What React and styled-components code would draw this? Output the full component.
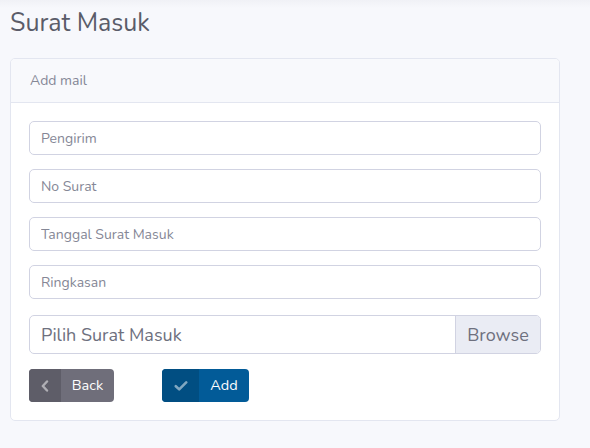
import React from 'react';
import styled, { createGlobalStyle } from 'styled-components';

const GlobalStyle = createGlobalStyle`
body {
    margin: 0;
    background: #f7f8fc;
    font-family: "Nunito", Lato, "Open Sans", sans-serif;
}
* { box-sizing: border-box; }
`

export default function App() {
    return (
        <Page>
            <GlobalStyle />
            <TopShade />
            <Title>Surat Masuk</Title>
            <Card>
                <CardHeader>Add mail</CardHeader>
                <CardBody>
                    <Input placeholder="Pengirim" />
                    <Input placeholder="No Surat" />
                    <Input placeholder="Tanggal Surat Masuk" />
                    <Input placeholder="Ringkasan" />
                    <FileGroup>
                        <FileLabel>Pilih Surat Masuk</FileLabel>
                        <BrowseBtn>Browse</BrowseBtn>
                    </FileGroup>
                    <Actions>
                        <SplitButton variant="back">
                            <IconPart variant="back">
                                <svg width="10" height="12" viewBox="0 0 10 12">
                                    <path d="M7 1.5 L2.8 6 L7 10.5" fill="none" stroke="rgba(255,255,255,.5)" strokeWidth="2.4" strokeLinecap="round" strokeLinejoin="round" />
                                </svg>
                            </IconPart>
                            <TextPart>Back</TextPart>
                        </SplitButton>
                        <SplitButton variant="add">
                            <IconPart variant="add">
                                <svg width="14" height="12" viewBox="0 0 14 12">
                                    <path d="M1.8 6.2 L5.2 9.4 L12.2 2.4" fill="none" stroke="rgba(255,255,255,.5)" strokeWidth="2.6" strokeLinecap="round" strokeLinejoin="round" />
                                </svg>
                            </IconPart>
                            <TextPart>Add</TextPart>
                        </SplitButton>
                    </Actions>
                </CardBody>
            </Card>
        </Page>
    )
}

//CSS//
const Page = styled.div`
padding: 0 30px 27px 10px;
min-height: 448px;
`

const TopShade = styled.div`
position: absolute;
top: 0;
left: 0;
right: 0;
height: 8px;
background: linear-gradient(#f0f1f6, #f7f8fc);
`

const Title = styled.h1`
position: relative;
margin: 0;
padding-top: 6px;
height: 58px;
font-size: 25px;
font-weight: 400;
color: #5a5c69;
`

const Card = styled.div`
background: #fff;
border: 1px solid #e3e6f0;
border-radius: 5px;
overflow: hidden;
`

const CardHeader = styled.div`
height: 44px;
padding: 0 19px;
display: flex;
align-items: center;
background: #f8f9fc;
border-bottom: 1px solid #e3e6f0;
font-size: 14px;
color: #858796;
`

const CardBody = styled.div`
padding: 18px 18px 18px 18px;
display: flex;
flex-direction: column;
`

const Input = styled.input`
height: 34px;
margin-bottom: 14px;
padding: 0 11px;
border: 1px solid #d1d3e2;
border-radius: 5px;
font-family: inherit;
font-size: 14px;
color: #6e707e;
outline: none;

&::placeholder {
    color: #858796;
}
`

const FileGroup = styled.div`
height: 39px;
margin-top: 2px;
display: flex;
border: 1px solid #d1d3e2;
border-radius: 5px;
overflow: hidden;
`

const FileLabel = styled.div`
flex: 1;
display: flex;
align-items: center;
padding: 0 11px;
font-size: 18px;
color: #6e707e;
`

const BrowseBtn = styled.div`
width: 85px;
display: flex;
align-items: center;
justify-content: center;
background: #eaecf4;
border-left: 1px solid #d1d3e2;
font-size: 18px;
color: #6e707e;
`

const Actions = styled.div`
display: flex;
gap: 48px;
margin-top: 15px;
`

const SplitButton = styled.div`
display: flex;
height: 33px;
width: ${p => p.variant === 'add' ? '87px' : '85px'};
border-radius: 4px;
overflow: hidden;
background: ${p => p.variant === 'add' ? '#025b98' : '#6f6e7a'};
color: #fff;
font-size: 14.5px;
`

const IconPart = styled.div`
width: ${p => p.variant === 'add' ? '37px' : '32px'};
display: flex;
align-items: center;
justify-content: center;
background: ${p => p.variant === 'add' ? '#014e82' : '#5e5d68'};
`

const TextPart = styled.div`
flex: 1;
display: flex;
align-items: center;
justify-content: center;
padding-bottom: 1px;
`
